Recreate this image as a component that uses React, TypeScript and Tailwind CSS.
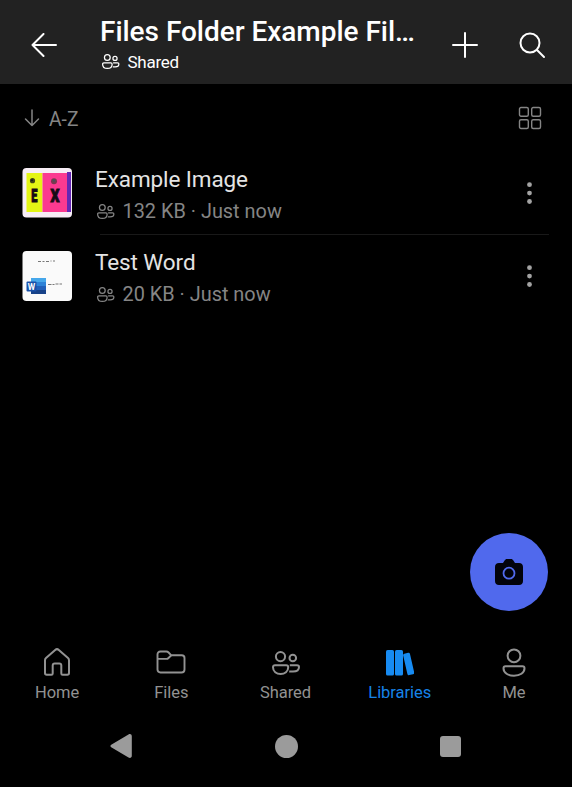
import type { ReactNode } from "react";

function PeopleIcon({ className, strokeWidth = 1.5 }: { className: string; strokeWidth?: number }) {
  return (
    <svg viewBox="0 0 28 24" className={className} fill="none" stroke="currentColor" strokeWidth={strokeWidth}>
      <circle cx="8.500" cy="5.600" r="4.600" />
      <circle cx="20.800" cy="7" r="3.300" />
      <path d="M3 14.200h11.200c1.200 0 2 .8 2 2 0 4.200-3.400 6.800-7.600 6.800S1 20.400 1 16.200c0-1.200.8-2 2-2Z" />
      <path d="M17.800 14.200h7.200c1.100 0 2 .8 2 1.800 0 3.300-2.600 4.600-6 4.600-1.200 0-2.400 0-3.800-.1" />
    </svg>
  );
}

function ImageThumb() {
  return (
    <svg viewBox="0 0 50 50" className="h-[50px] w-[50px] shrink-0">
      <defs>
        <clipPath id="thumb">
          <rect x=".500" width="49.500" height="49.500" rx="4" />
        </clipPath>
      </defs>
      <g clipPath="url(#thumb)">
        <rect width="50" height="50" fill="#f7edf5" />
        <rect x="4.500" y="5" width="16" height="39" fill="#e4f515" />
        <rect x="20.500" y="5" width="25" height="39" fill="#fb3a90" />
        <path d="M45 4h4v40h-4z" fill="#6527b5" />
        <circle cx="10.500" cy="12.700" r="2.600" fill="#424515" />
        <circle cx="32" cy="13.200" r="3" fill="#79394f" />
        <circle cx="10" cy="12.300" r="1" fill="#161b22" />
        <circle cx="32" cy="12.500" r="1.200" fill="#48525b" />
        <g fill="#170b16" stroke="#170b16" strokeWidth="1" fontFamily="Roboto, sans-serif" fontWeight="900" fontSize="19" textAnchor="middle">
          <text transform="translate(12.300 34) scale(.58 1)">E</text>
          <text transform="translate(33 34) scale(.74 1)">X</text>
        </g>
      </g>
    </svg>
  );
}

function WordThumb() {
  return (
    <svg viewBox="0 0 50 50" className="h-[50px] w-[50px] shrink-0">
      <rect x=".500" width="49.500" height="50" rx="4" fill="#fafafa" />
      <path d="M16 10.500h3m1.500 0h2m1.500 0h3m1.500-.5h1m1.500 0h2" stroke="#777" strokeWidth="1" />
      <path d="M26 33.500h3.500m1 0h2m1-.5h3m1 0h2.500" stroke="#777" strokeWidth="1" />
      <rect x="9" y="27" width="15" height="4.500" fill="#46a7ea" />
      <rect x="9" y="31" width="15" height="4.500" fill="#2d82d7" />
      <rect x="9" y="35" width="15" height="4" fill="#215fb9" />
      <rect x="9" y="39" width="15" height="4" fill="#174288" />
      <rect x="4.500" y="30.500" width="10" height="10" rx="1" fill="#1950a8" />
      <text x="9.500" y="38.500" fill="#fff" fontFamily="Roboto, sans-serif" fontWeight="700" fontSize="8.500" textAnchor="middle">W</text>
    </svg>
  );
}

function FileRow({ thumb, name, meta }: { thumb: ReactNode; name: string; meta: string }) {
  return (
    <div className="flex h-[82px] items-center pl-[22px] pr-[39px]">
      {thumb}
      <div className="ml-[23px] flex flex-1 flex-col pt-[6px]">
        <span className="text-[22.500px] leading-[31px] tracking-[-0.100px] text-[#e4e4e4]">{name}</span>
        <span className="flex items-center pt-px text-[19.900px] leading-[32px] text-[#858585]">
          <PeopleIcon className="-mt-[2px] ml-[2px] mr-[8px] h-[15px] w-[17.500px]" strokeWidth={2} />
          {meta}
        </span>
      </div>
      <svg viewBox="0 0 7 24" className="h-[24px] w-[7px]" fill="#a3a3a3">
        <circle cx="3.500" cy="3.700" r="2.400" />
        <circle cx="3.500" cy="12.100" r="2.400" />
        <circle cx="3.500" cy="20.500" r="2.400" />
      </svg>
    </div>
  );
}

function Tab({ label, icon, active = false }: { label: string; icon: ReactNode; active?: boolean }) {
  return (
    <div className={`flex flex-1 flex-col items-center ${active ? "text-[#1683e8]" : "text-[#929292]"}`}>
      <div className="flex h-[30px] items-center justify-center">{icon}</div>
      <span className="mt-[3px] text-[16.500px] leading-[26px] tracking-[-0.050px]">{label}</span>
    </div>
  );
}

export default function App() {
  return (
    <div className="relative flex h-[787px] w-[572px] flex-col overflow-hidden bg-black font-['Roboto',sans-serif]">
      <header className="flex h-[84px] shrink-0 items-center bg-[#222] text-white">
        <svg viewBox="0 0 26 24" className="ml-[31px] mr-px mt-[6px] h-[24px] w-[26px]" fill="none" stroke="currentColor" strokeWidth="2" strokeLinecap="round" strokeLinejoin="round">
          <path d="M25 12H1.500M12.500 1 1.500 12l11 11" />
        </svg>
        <div className="ml-[42px] w-[320px] pt-[4px]">
          <h1 className="pt-px text-[28px] font-medium leading-[34px] tracking-[-0.030px] whitespace-nowrap">Files Folder Example Fil…</h1>
          <div className="flex items-center text-[17px] leading-[26px] tracking-[-0.250px]">
            <PeopleIcon className="ml-[2px] mr-[8px] h-[15px] w-[17.500px]" strokeWidth={2} />
            Shared
          </div>
        </div>
        <svg viewBox="0 0 26 26" className="ml-[32px] mt-[6px] h-[26px] w-[26px]" stroke="currentColor" strokeWidth="2" strokeLinecap="round">
          <path d="M13 1v24M1 13h24" />
        </svg>
        <svg viewBox="0 0 27 27" className="ml-[41px] mt-[6px] h-[27px] w-[27px]" fill="none" stroke="currentColor" strokeWidth="2" strokeLinecap="round">
          <circle cx="11" cy="11" r="9.500" />
          <path d="m18 18 7 7" />
        </svg>
      </header>

      <div className="flex h-[68px] shrink-0 items-center pl-[24px] pr-[30px] text-[#858585]">
        <svg viewBox="0 0 16 18" className="h-[18px] w-[16px]" fill="none" stroke="currentColor" strokeWidth="1.500" strokeLinecap="round" strokeLinejoin="round">
          <path d="M8 1v15.500M1.500 10 8 16.500l6.500-6.500" />
        </svg>
        <span className="ml-[9px] flex-1 pt-[4px] text-[19.300px] leading-[26px]">A-Z</span>
        <svg viewBox="0 0 24 24" className="h-[24px] w-[24px]" fill="none" stroke="currentColor" strokeWidth="1.400">
          <rect x="1.500" y="1.500" width="8.800" height="8.800" rx="1.500" />
          <rect x="13.700" y="1.500" width="8.800" height="8.800" rx="1.500" />
          <rect x="1.500" y="13.700" width="8.800" height="8.800" rx="1.500" />
          <rect x="13.700" y="13.700" width="8.800" height="8.800" rx="1.500" />
        </svg>
      </div>

      <main className="flex-1">
        <FileRow thumb={<ImageThumb />} name="Example Image" meta="132 KB · Just now" />
        <div className="ml-[100px] mr-[23px] h-px bg-[#191919]" />
        <FileRow thumb={<WordThumb />} name="Test Word" meta="20 KB · Just now" />
      </main>

      <button className="absolute left-[470px] top-[533px] flex h-[78px] w-[78px] items-center justify-center rounded-full bg-[#5069ed]">
        <svg viewBox="0 0 28 26" className="h-[26px] w-[28px]">
          <path d="M4 4h4l1.600-2.400C10.200.6 10.800 0 12 0h4c1.200 0 1.800.6 2.400 1.600L20 4h4c2.500 0 4 1.500 4 4v14c0 2.500-1.500 4-4 4H4c-2.500 0-4-1.500-4-4V8c0-2.500 1.500-4 4-4Z" fill="#02030b" />
          <circle cx="14" cy="14.200" r="5.500" fill="none" stroke="#5069ed" strokeWidth="1.800" />
        </svg>
      </button>

      <nav className="flex h-[66px] shrink-0 pr-px">
        <Tab
          label="Home"
          icon={
            <svg viewBox="0 0 28 28" className="h-[28px] w-[28px]" fill="none" stroke="currentColor" strokeWidth="2" strokeLinejoin="round">
              <path d="M12.200 1.900 3 10.100c-.7.600-1 1.300-1 2.200V25c0 1 .7 1.700 1.700 1.700H8.400c.8 0 1.300-.5 1.300-1.300v-8c0-1.200.8-2 2-2h4.600c1.200 0 2 .8 2 2v8c0 .8.500 1.300 1.300 1.300h4.700c1 0 1.700-.7 1.700-1.700V12.300c0-.9-.3-1.600-1-2.200l-9.200-8.200c-1-.9-2.600-.9-3.600 0Z" />
            </svg>
          }
        />
        <Tab
          label="Files"
          icon={
            <svg viewBox="0 0 30 24" className="h-[24px] w-[30px]" fill="none" stroke="currentColor" strokeWidth="1.900" strokeLinejoin="round">
              <path d="M1.500 4.500c0-1.800 1-3 3-3h5.800c1 0 1.600.3 2.300 1l2.700 2.800h10.400c1.800 0 2.800 1.100 2.800 2.800v11.400c0 1.800-1 3-3 3h-21c-2 0-3-1.200-3-3V4.500Z" />
              <path d="M1.500 8.900h9c.8 0 1.400-.3 2-.9l2.800-2.700" />
            </svg>
          }
        />
        <Tab label="Shared" icon={<PeopleIcon className="mt-[2px] h-[24px] w-[28px]" strokeWidth={2} />} />
        <Tab
          label="Libraries"
          active
          icon={
            <svg viewBox="0 0 28 27" className="h-[27px] w-[28px]" fill="#178bf2">
              <rect x="0" y="1" width="8" height="25.500" rx="1.600" />
              <rect x="9" y="1" width="8" height="25.500" rx="1.600" />
              <rect x="19.200" y="4" width="7" height="22" rx="1.600" transform="rotate(-13 22.500 15)" />
            </svg>
          }
        />
        <Tab
          label="Me"
          icon={
            <svg viewBox="0 0 24 29" className="h-[29px] w-[24px]" fill="none" stroke="currentColor" strokeWidth="2">
              <circle cx="12" cy="7.800" r="6.400" />
              <path d="M3.500 18.200h17c1.200 0 2 .9 2 2.100 0 4.700-4.600 7.400-10.500 7.400S1.500 25 1.500 20.300c0-1.200.8-2.100 2-2.100Z" />
            </svg>
          }
        />
      </nav>

      <footer className="flex h-[74px] shrink-0 items-center justify-between pb-[8px] pl-[110px] pr-[111px] text-[#9b9b9b]">
        <svg viewBox="0 0 22 24" className="h-[24px] w-[22px]" fill="currentColor">
          <path d="M1.200 10.800 18.500.5c1.700-1 3.300 0 3.300 1.800v19.400c0 1.800-1.600 2.800-3.300 1.800L1.200 13.200c-1-.6-1-1.800 0-2.400Z" />
        </svg>
        <span className="h-[23px] w-[23px] rounded-full bg-current" />
        <span className="h-[21px] w-[21px] rounded-[3px] bg-current" />
      </footer>
    </div>
  );
}
